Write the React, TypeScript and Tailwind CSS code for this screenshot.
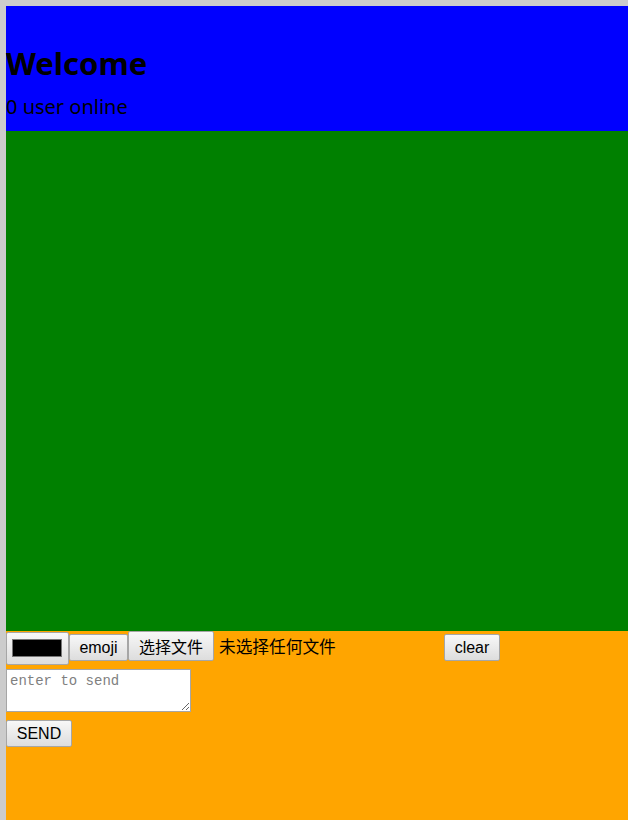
export default function App() {
  const btn =
    "box-border flex items-center justify-center border border-[#a6a6a6] rounded-[2px] bg-gradient-to-b from-[#f8f8f8] to-[#dddddd] text-black text-[16px] px-[9px]";

  return (
    <div className="min-h-screen flex flex-col bg-[#cccccc] pt-[6px] pl-[6px]">
      {/* header */}
      <div className="h-[125px] bg-[#0000ff] pt-[39px] text-black font-['Noto_Sans',sans-serif]">
        <h1 className="text-[31px] leading-[36px] font-bold">Welcome</h1>
        <p className="mt-[12px] text-[20px] leading-[28px]">0 user online</p>
      </div>

      {/* messages */}
      <div className="h-[500px] bg-[#008000]" />

      {/* composer */}
      <div className="flex-1 bg-[#ffa500] flex flex-col items-start font-['Liberation_Sans',sans-serif]">
        <div className="flex items-start h-[34px]">
          <div className="box-border mt-[1px] w-[63px] h-[33px] border border-[#a6a6a6] rounded-[2px] bg-gradient-to-b from-[#f8f8f8] to-[#dddddd] pt-[6px] pl-[5px]">
            <div className="w-[50px] h-[18px] border border-[#777777] bg-black" />
          </div>
          <button className={`${btn} mt-[3px] h-[27px] w-[59px]`}>emoji</button>
          <button
            className={`${btn} h-[30px] w-[86px] font-['Noto_Sans_CJK_SC',sans-serif] text-[16.5px] leading-none`}
          >
            选择文件
          </button>
          <span className="ml-[5px] w-[225px] mt-[4px] text-[16.7px] leading-[22px] text-black font-['Noto_Sans_CJK_SC',sans-serif]">
            未选择任何文件
          </span>
          <button className={`${btn} mt-[3px] h-[27px] w-[56px]`}>clear</button>
        </div>

        <textarea
          placeholder="enter to send"
          className="block mt-[4px] box-border w-[185px] h-[43px] border border-[#a6a6a6] bg-white px-[3px] py-[2px] font-['Liberation_Mono',monospace] text-[14px] leading-[18px] placeholder:text-[#808080] resize outline-none"
        />

        <button className={`${btn} mt-[8px] h-[27px] w-[66px]`}>SEND</button>
      </div>
    </div>
  );
}
